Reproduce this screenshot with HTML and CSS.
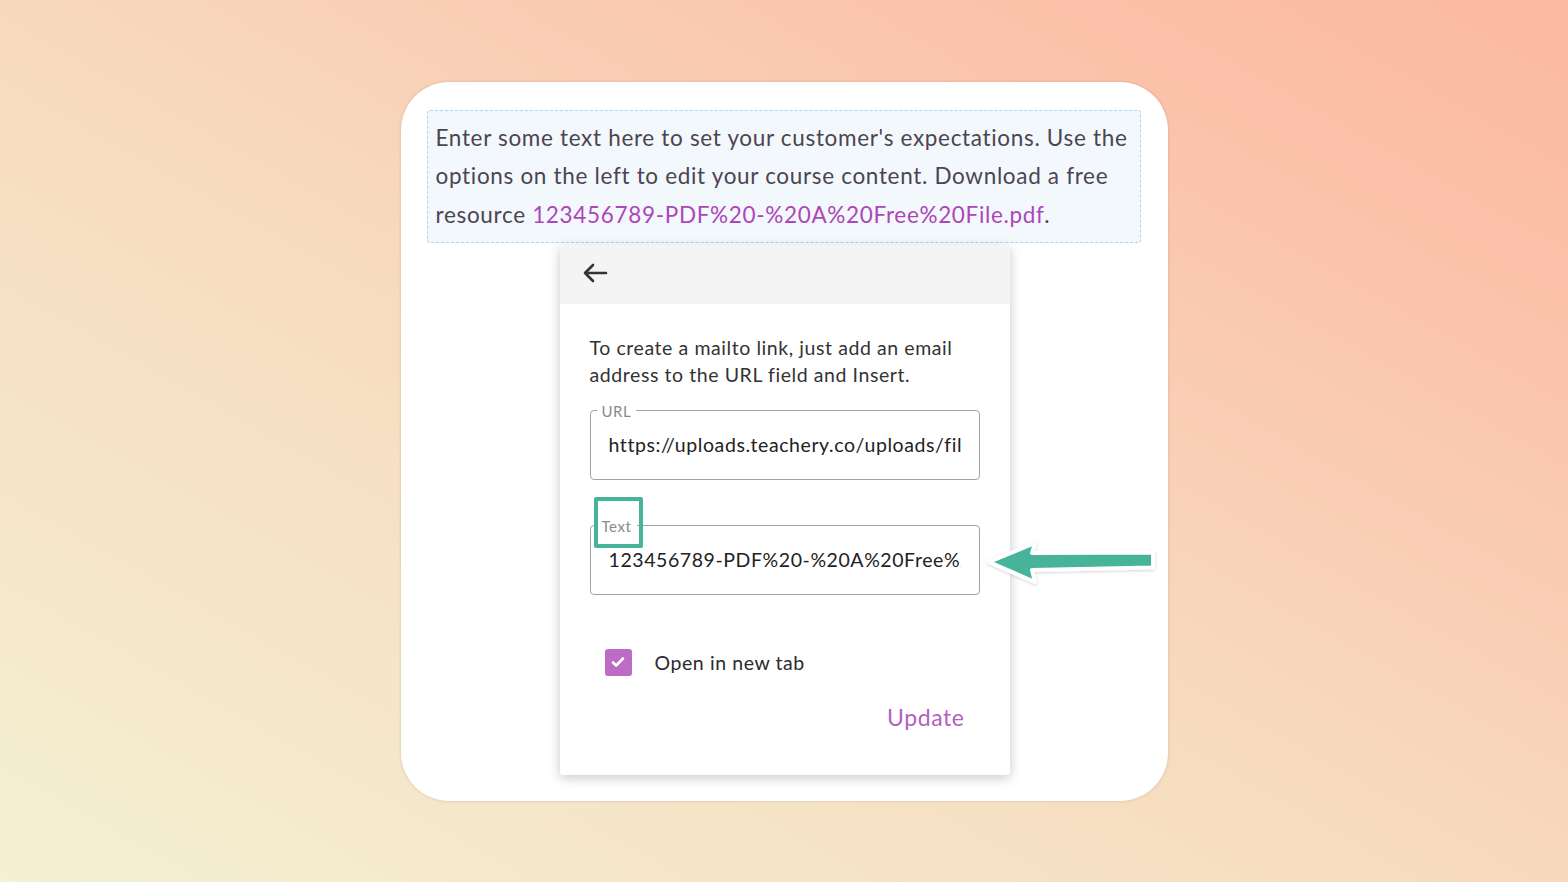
FILE: index.html
```html
<!DOCTYPE html>
<html lang="en">
<head>
    <meta charset="UTF-8">
    <title>Edit Link</title>
    <link rel="stylesheet" href="styles.css">
</head>
<body>
    <div class="card">
        <div class="text-block">
            Enter some text here to set your customer's expectations. Use the options on the left to edit your course content. Download a free resource <a href="#">123456789-PDF%20-%20A%20Free%20File.pdf</a>.
        </div>

        <div class="popup">
            <div class="popup-head">
                <svg class="back" width="26" height="20" viewBox="0 0 26 20">
                    <path d="M24 10H3M11 2L3 10l8 8" fill="none" stroke="#333" stroke-width="2.6" stroke-linecap="round" stroke-linejoin="round"/>
                </svg>
            </div>
            <div class="popup-body">
                <p class="hint">To create a mailto link, just add an email address to the URL field and Insert.</p>

                <fieldset class="field">
                    <legend>URL</legend>
                    <input type="text" value="https://uploads.teachery.co/uploads/files/123456789-PDF%20-%20A%20Free%20File.pdf">
                </fieldset>

                <fieldset class="field">
                    <legend class="marked">Text<span class="highlight"></span></legend>
                    <input type="text" value="123456789-PDF%20-%20A%20Free%20File.pdf">
                </fieldset>

                <label class="check-row">
                    <span class="check">
                        <svg width="14" height="12" viewBox="0 0 14 12"><path d="M2 6.5l3.2 3L12 2.5" fill="none" stroke="#fff" stroke-width="2.6" stroke-linecap="round" stroke-linejoin="round"/></svg>
                    </span>
                    Open in new tab
                </label>

                <div class="actions">
                    <button class="update">Update</button>
                </div>
            </div>
        </div>

        <svg class="pointer" width="182" height="54" viewBox="0 0 182 54">
            <defs>
                <filter id="soft" x="-10%" y="-30%" width="120%" height="160%">
                    <feDropShadow dx="0" dy="1" stdDeviation="1.5" flood-color="#000" flood-opacity="0.18"/>
                </filter>
            </defs>
            <path d="M8 26L54 7L51 17L172 16.5L172 31.5L51 34L54 46Z" fill="#47b39b" stroke="#fff" stroke-width="4" stroke-linejoin="round" filter="url(#soft)"/>
        </svg>
    </div>
</body>
</html>
```

FILE: styles.css
```css
body {
    margin: 0;
    height: 882px;
    display: flex;
    align-items: center;
    justify-content: center;
    font-family: Lato, "Noto Sans", sans-serif;
    letter-spacing: 0.036em;
    background: linear-gradient(to top right, #f4f0d2 0%, #f7dcbf 45%, #fbc3ab 80%, #fcb8a2 100%);
}
.card {
    position: relative;
    box-sizing: border-box;
    width: 767px;
    height: 719px;
    padding: 28px 27px 0 26px;
    background: #fff;
    border-radius: 48px;
    box-shadow: 0 0 3px rgba(120, 80, 60, 0.25);
}
.text-block {
    box-sizing: border-box;
    height: 133px;
    padding: 8px 3px 0 8px;
    background: #f3f8fd;
    border: 1px dashed #a6d8ef;
    border-radius: 3px;
    color: #4b4550;
    font-size: 22.5px;
    line-height: 38.5px;
    letter-spacing: 0.03em;
}
.text-block a {
    color: #ad46b8;
    text-decoration: none;
}
.popup {
    width: 450px;
    height: 530px;
    margin: 2px 0 0 133px;
    background: #fff;
    border-radius: 3px;
    box-shadow: 0 3px 12px rgba(0, 0, 0, 0.22);
    overflow: hidden;
}
.popup-head {
    height: 59px;
    background: #f4f4f4;
    display: flex;
    align-items: center;
    padding-left: 22px;
}
.back {
    display: block;
    margin-top: -2px;
}
.popup-body {
    padding: 30px 30px 0;
}
.hint {
    margin: 0 0 15px;
    font-size: 19.5px;
    line-height: 27px;
    color: #333;
}
.field {
    margin: 0 0 38px;
    padding: 0 18px 12px;
    border: 1px solid #a3a3a3;
    border-radius: 4px;
}
.field legend {
    margin-left: -12px;
    padding: 0 5px;
    font-size: 15px;
    line-height: 16px;
    color: #8a8a8a;
}
.field input {
    box-sizing: border-box;
    display: block;
    width: 100%;
    height: 44px;
    margin-top: 4px;
    padding: 0;
    border: none;
    outline: none;
    font-family: inherit;
    font-size: 19.5px;
    letter-spacing: inherit;
    color: #222;
    background: transparent;
}
.marked {
    position: relative;
}
.highlight {
    position: absolute;
    left: -3px;
    top: -21px;
    width: 41px;
    height: 43px;
    border: 4px solid #46b39b;
    border-radius: 2px;
}
.check-row {
    display: flex;
    align-items: center;
    gap: 23px;
    margin: 54px 0 0 15px;
    font-size: 19.5px;
    color: #2b2b2b;
}
.check {
    width: 27px;
    height: 27px;
    border-radius: 3px;
    background: #bd6cc6;
    display: flex;
    align-items: center;
    justify-content: center;
}
.actions {
    display: flex;
    justify-content: flex-end;
    margin-top: 27px;
    padding-right: 15px;
}
.update {
    padding: 0;
    border: none;
    background: none;
    font-family: inherit;
    font-size: 23px;
    letter-spacing: inherit;
    color: #b35fc4;
    cursor: pointer;
}
.pointer {
    position: absolute;
    left: 580px;
    top: 454px;
}
```
